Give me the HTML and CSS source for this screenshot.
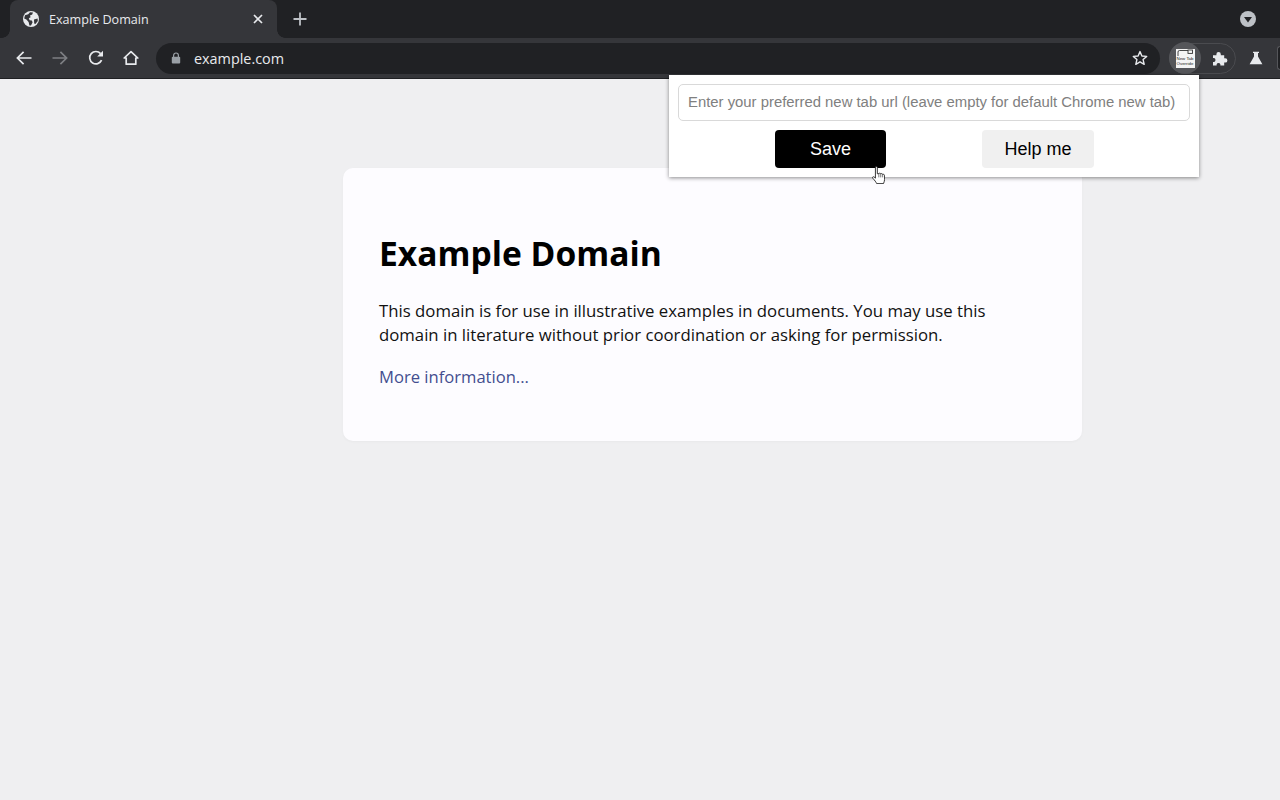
FILE: index.html
```html
<!DOCTYPE html>
<html lang="en">
<head>
<meta charset="utf-8">
<title>Example Domain</title>
<link rel="stylesheet" href="styles.css">
</head>
<body>
<header class="chrome">
  <div class="tabstrip">
    <div class="tab">
      <svg class="favicon" viewBox="0 0 16 16"><circle cx="8" cy="8" r="8" fill="#e8eaed"/><path d="M2 4.2 5.2 3.2 7 1.2 10 1.6 9.2 3.6 7 4.6 7.6 6.2 5.8 7.2 6.6 9.2 8.8 9.6 9.6 11.2 8 14.6 6.4 14.4 5.6 11 3.4 8.6 1.2 7.4Z" fill="#35363a"/><path d="M11 8.4 14.6 7.6 14.8 10 12.4 13 11.2 12.6Z" fill="#35363a"/></svg>
      <span class="tab-title">Example Domain</span>
      <svg class="tab-close" viewBox="0 0 10 10"><path d="M1 1 9 9M9 1 1 9" stroke="#e8eaed" stroke-width="1.7" fill="none"/></svg>
    </div>
    <svg class="new-tab" viewBox="0 0 14 14"><path d="M7 0.5V13.5M0.5 7H13.5" stroke="#bdc1c6" stroke-width="1.8" fill="none"/></svg>
    <svg class="tab-menu" viewBox="0 0 16 16"><circle cx="8" cy="8" r="8" fill="#bdc1c6"/><path d="M4 6H12L8 11.4Z" fill="#202124"/></svg>
  </div>
  <div class="toolbar">
    <svg class="nav-icon" viewBox="0 0 16 16"><path d="M15.5 8H1.5M7.6 1.8 1.4 8l6.2 6.2" stroke="#e8eaed" stroke-width="1.7" fill="none"/></svg>
    <svg class="nav-icon" viewBox="0 0 16 16"><path d="M0.5 8H14.5M8.4 1.8 14.6 8 8.4 14.2" stroke="#7d7f83" stroke-width="1.7" fill="none"/></svg>
    <svg class="nav-icon" viewBox="0 0 16 16"><path d="M13.6 10.2A6.2 6.2 0 1 1 12.6 3.6" stroke="#e8eaed" stroke-width="1.7" fill="none"/><path d="M15 0.8V6.6H9.2Z" fill="#e8eaed"/></svg>
    <svg class="nav-icon nav-home" viewBox="0 0 16 16"><path d="M8 1.6 1.2 8H3.2V14.2H12.8V8H14.8Z" stroke="#e8eaed" stroke-width="1.7" stroke-linejoin="round" fill="none"/></svg>
    <div class="omnibox">
      <svg class="lock" viewBox="0 0 10 12"><path d="M2.6 5V3.4A2.4 2.4 0 0 1 7.4 3.4V5" stroke="#9aa0a6" stroke-width="1.2" fill="none"/><rect x="0.8" y="4.8" width="8.4" height="6.6" rx="1" fill="#9aa0a6"/></svg>
      <span class="url">example.com</span>
      <svg class="star" viewBox="0 0 16 16"><path d="M8 1.6 9.9 6 14.7 6.4 11.1 9.6 12.2 14.3 8 11.8 3.8 14.3 4.9 9.6 1.3 6.4 6.1 6Z" stroke="#e8eaed" stroke-width="1.4" stroke-linejoin="round" fill="none"/></svg>
    </div>
    <div class="ext-group">
      <div class="ext-active">
        <div class="ext-logo">
          <svg class="ext-logo-top" viewBox="0 0 18 7"><path d="M2 7V3Q2 1.5 3.5 1.5H12" stroke="#333" stroke-width="0.9" fill="none"/><rect x="12" y="1" width="4.5" height="3.4" fill="none" stroke="#333" stroke-width="0.9"/></svg>
          <span class="ext-logo-text">New Tab<br>Override</span>
        </div>
      </div>
      <svg class="puzzle" viewBox="0 0 16 16"><path d="M1 5.2H4.4V4.2A2.2 2.2 0 0 1 8.8 4.2V5.2H12.2V8.2H13.2A2.2 2.2 0 0 1 13.2 12.6H12.2V15.6H8.4V14.4A2 2 0 0 0 4.6 14.4V15.6H1V12H2.2A2.2 2.2 0 0 0 2.2 8H1Z" fill="#e8eaed"/></svg>
    </div>
    <svg class="flask" viewBox="0 0 14 14"><path d="M4 0.8H10V2H9V5.4L13.4 13.2H0.6L5 5.4V2H4Z" fill="#e8eaed"/></svg>
    <div class="avatar-edge"></div>
  </div>
  <div class="chrome-line"></div>
</header>
<main class="page">
  <article class="card">
    <h1 class="card-title">Example Domain</h1>
    <p class="card-text">This domain is for use in illustrative examples in documents. You may use this domain in literature without prior coordination or asking for permission.</p>
    <p class="card-more"><a class="card-link" href="#">More information...</a></p>
  </article>
</main>
<aside class="popup">
  <input class="popup-input" type="text" placeholder="Enter your preferred new tab url (leave empty for default Chrome new tab)">
  <div class="popup-actions">
    <button class="btn btn-save">Save</button>
    <button class="btn btn-help">Help me</button>
  </div>
</aside>
<svg class="cursor" viewBox="0.8 0 12.2 19" preserveAspectRatio="none"><path d="M4 1.2C4 0.4 5.8 0.4 5.8 1.2V8.2L7.2 8C7.8 7.4 8.8 7.6 9 8.2 9.6 7.8 10.6 8 10.8 8.8 11.6 8.6 12.6 9 12.6 10V14.4C12.6 16 12 17 11.6 18.6H5.2C4.6 17 3.4 15.2 1.6 13 0.8 12 1.6 10.8 2.8 11.6L4 12.8Z" fill="#fff" stroke="#222" stroke-width="0.9" stroke-linejoin="round"/><path d="M7.2 8V12M9 8.2V12M10.8 8.8V12" stroke="#222" stroke-width="0.6" fill="none"/></svg>
</body>
</html>
```

FILE: styles.css
```css
* { box-sizing: border-box; }
html, body { margin: 0; height: 100%; }
body {
  width: 1280px;
  height: 800px;
  overflow: hidden;
  position: relative;
  background: #efeff1;
  font-family: "Open Sans", "Noto Sans", sans-serif;
  display: flex;
  flex-direction: column;
}
.chrome { flex: none; background: #35363a; }
.tabstrip {
  height: 38px;
  background: #202124;
  display: flex;
  align-items: center;
  padding-left: 10px;
  padding-right: 24px;
}
.tab {
  position: relative;
  width: 267px;
  height: 38px;
  background: #35363a;
  border-radius: 8px 8px 0 0;
  display: flex;
  align-items: center;
  padding: 0 13px;
}
.tab::before,
.tab::after {
  content: "";
  position: absolute;
  bottom: 0;
  width: 8px;
  height: 8px;
}
.tab::before {
  left: -8px;
  background: radial-gradient(circle at 0 0, transparent 7.5px, #35363a 8px);
}
.tab::after {
  right: -8px;
  background: radial-gradient(circle at 100% 0, transparent 7.5px, #35363a 8px);
}
.favicon { width: 16px; height: 16px; flex: none; }
.tab-title {
  margin-left: 10px;
  color: #e8eaed;
  font-size: 12.6px;
  white-space: nowrap;
  flex: 1;
}
.tab-close { width: 10px; height: 10px; flex: none; margin-right: 1px; }
.new-tab { width: 14px; height: 14px; margin-left: 16px; flex: none; }
.tab-menu { width: 16px; height: 16px; margin-left: auto; flex: none; }
.toolbar {
  height: 40px;
  display: flex;
  align-items: center;
  padding-left: 16px;
  background: #35363a;
}
.nav-icon { width: 16px; height: 16px; flex: none; margin-right: 20px; }
.nav-home { margin-left: -1px; }
.omnibox {
  width: 1004px;
  height: 31px;
  margin-left: -3px;
  border-radius: 16px;
  background: #202124;
  display: flex;
  align-items: center;
  padding: 0 12px 0 15px;
}
.lock { width: 10px; height: 12px; flex: none; }
.url { margin-left: 13px; color: #e8eaed; font-size: 14.4px; flex: 1; }
.star { width: 16px; height: 16px; flex: none; }
.ext-group {
  width: 67px;
  height: 31px;
  margin-left: 9px;
  border: 1px solid #4a4b4f;
  border-radius: 16px;
  display: flex;
  align-items: center;
  flex: none;
}
.ext-active {
  width: 32px;
  height: 32px;
  margin-left: -1px;
  border-radius: 50%;
  background: #55565a;
  display: flex;
  align-items: center;
  justify-content: center;
  flex: none;
}
.ext-logo {
  width: 19px;
  height: 19px;
  background: #f4f4f4;
  display: flex;
  flex-direction: column;
  align-items: center;
  overflow: hidden;
}
.ext-logo-top { width: 18px; height: 7px; flex: none; }
.ext-logo-text {
  font-family: "Liberation Sans", sans-serif;
  font-size: 4.4px;
  line-height: 5.5px;
  color: #222;
  text-align: center;
  white-space: nowrap;
}
.puzzle { width: 16px; height: 16px; margin-left: 11px; flex: none; }
.flask { width: 14px; height: 14px; margin-left: 13px; flex: none; }
.avatar-edge {
  width: 3px;
  height: 24px;
  margin-left: auto;
  border: 1px solid #55565a;
  border-right: 0;
  border-radius: 12px 0 0 12px;
  background: #202124;
  flex: none;
}
.chrome-line { height: 1px; background: #1f2023; }
.page {
  flex: 1;
  padding: 89px 198px 0 343px;
}
.card {
  width: 739px;
  height: 273px;
  padding: 63px 36px 0;
  background: #fdfcff;
  border-radius: 10px;
  box-shadow: 0 1px 3px rgba(0, 0, 0, 0.03);
}
.card-title {
  margin: 0 0 24px;
  font-size: 33.6px;
  line-height: 44px;
  font-weight: 700;
  color: #000;
}
.card-text {
  margin: 0 0 18px;
  font-size: 16.75px;
  line-height: 24px;
  color: #111;
}
.card-more { margin: 0; font-size: 16.6px; line-height: 24px; }
.card-link { color: #434e8f; text-decoration: none; }
.popup {
  position: absolute;
  left: 669px;
  top: 75px;
  width: 530px;
  height: 102px;
  background: #fff;
  box-shadow: 0 1px 4px rgba(0, 0, 0, 0.45);
  padding: 9px;
}
.popup-input {
  display: block;
  width: 512px;
  height: 37px;
  border: 1px solid #d9d9d9;
  border-radius: 5px;
  padding: 0 9px 2px;
  font-family: "Liberation Sans", sans-serif;
  font-size: 14.87px;
  outline: none;
  background: #fff;
}
.popup-input::placeholder { color: #808080; opacity: 1; }
.popup-actions {
  display: flex;
  gap: 96px;
  margin-top: 9px;
  padding-left: 97px;
}
.btn {
  height: 38px;
  border: 0;
  border-radius: 4px;
  font-family: "Liberation Sans", sans-serif;
  font-size: 18px;
  padding: 0;
}
.btn-save { width: 111px; background: #000; color: #fff; }
.btn-help { width: 112px; background: #f0f0f0; color: #000; }
.cursor {
  position: absolute;
  left: 872px;
  top: 166px;
  width: 13px;
  height: 18px;
}
```
